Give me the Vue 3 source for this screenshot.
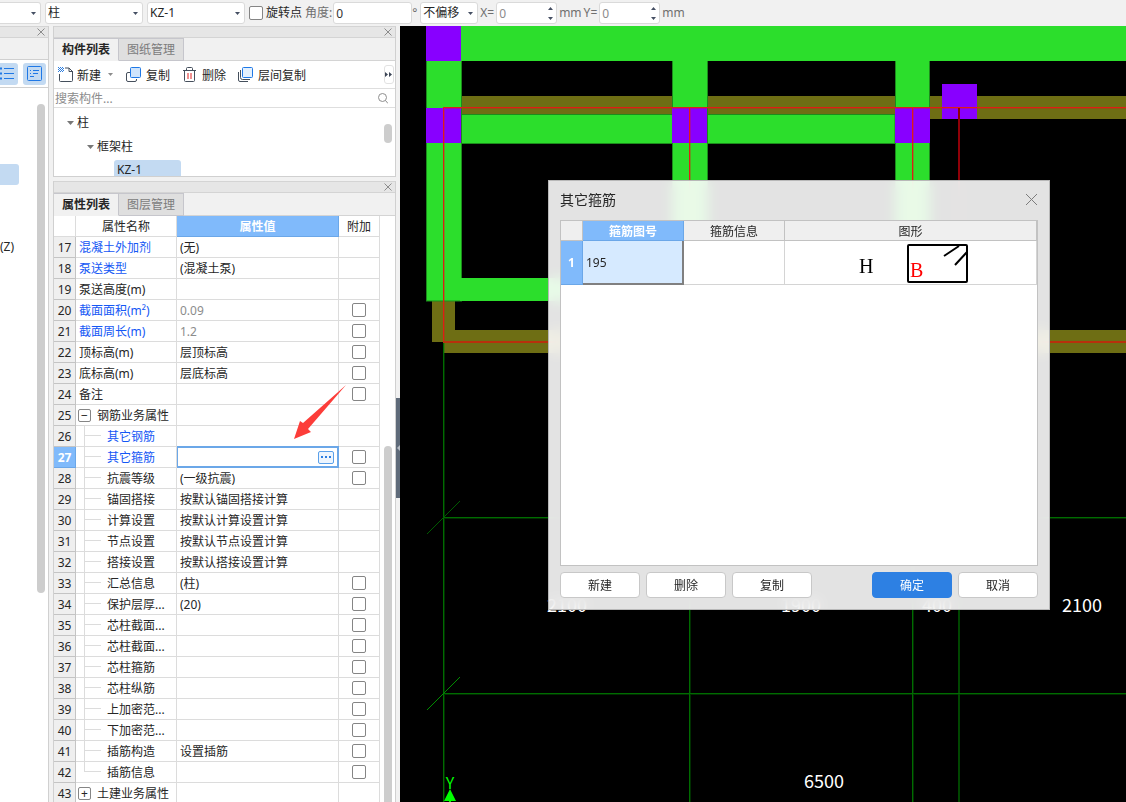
<script setup>
import { ref } from 'vue'

const rows = [
  { n: 17, name: '混凝土外加剂', value: '(无)', blue: true },
  { n: 18, name: '泵送类型', value: '(混凝土泵)', blue: true },
  { n: 19, name: '泵送高度(m)', value: '' },
  { n: 20, name: '截面面积(m²)', value: '0.09', blue: true, muted: true, check: true },
  { n: 21, name: '截面周长(m)', value: '1.2', blue: true, muted: true, check: true },
  { n: 22, name: '顶标高(m)', value: '层顶标高', check: true },
  { n: 23, name: '底标高(m)', value: '层底标高', check: true },
  { n: 24, name: '备注', value: '', check: true },
  { n: 25, name: '钢筋业务属性', value: '', group: '−' },
  { n: 26, name: '其它钢筋', value: '', blue: true, child: true },
  { n: 27, name: '其它箍筋', value: '', blue: true, child: true, check: true, active: true },
  { n: 28, name: '抗震等级', value: '(一级抗震)', child: true, check: true },
  { n: 29, name: '锚固搭接', value: '按默认锚固搭接计算', child: true },
  { n: 30, name: '计算设置', value: '按默认计算设置计算', child: true },
  { n: 31, name: '节点设置', value: '按默认节点设置计算', child: true },
  { n: 32, name: '搭接设置', value: '按默认搭接设置计算', child: true },
  { n: 33, name: '汇总信息', value: '(柱)', child: true, check: true },
  { n: 34, name: '保护层厚...', value: '(20)', child: true, check: true },
  { n: 35, name: '芯柱截面...', value: '', child: true, check: true },
  { n: 36, name: '芯柱截面...', value: '', child: true, check: true },
  { n: 37, name: '芯柱箍筋', value: '', child: true, check: true },
  { n: 38, name: '芯柱纵筋', value: '', child: true, check: true },
  { n: 39, name: '上加密范...', value: '', child: true, check: true },
  { n: 40, name: '下加密范...', value: '', child: true, check: true },
  { n: 41, name: '插筋构造', value: '设置插筋', child: true, check: true },
  { n: 42, name: '插筋信息', value: '', child: true, check: true, last: true },
  { n: 43, name: '土建业务属性', value: '', group: '+' }
]
const angle = ref('0')
const offsetX = ref('0')
const offsetY = ref('0')
const stirrup = ref('')
</script>

<template>
  <div class="app">
    <header class="topbar">
      <div class="pick cut">
        <select aria-label="楼层"><option></option></select>
        <svg class="caret" width="5" height="3"><path d="M0 0h5L2.500 3z" /></svg>
      </div>
      <div class="pick wide">
        <select aria-label="构件类型"><option>柱</option></select>
        <svg class="caret" width="5" height="3"><path d="M0 0h5L2.500 3z" /></svg>
      </div>
      <div class="pick wide">
        <select aria-label="构件"><option>KZ-1</option></select>
        <svg class="caret" width="5" height="3"><path d="M0 0h5L2.500 3z" /></svg>
      </div>
      <label class="rotate"><input type="checkbox" class="box" />旋转点</label>
      <label class="field angle"><span>角度:</span><input v-model="angle" type="text" /></label>
      <span class="degree">°</span>
      <div class="pick offset">
        <select aria-label="偏移方式"><option>不偏移</option></select>
        <svg class="caret" width="5" height="3"><path d="M0 0h5L2.500 3z" /></svg>
      </div>
      <label class="field shift">
        <span>X=</span>
        <span class="spin"><input v-model="offsetX" type="text" />
          <svg width="5" height="15"><path d="M0 4h5L2.500 1zM0 11h5L2.500 14z" /></svg></span>
        <span>mm</span>
      </label>
      <label class="field shift">
        <span>Y=</span>
        <span class="spin"><input v-model="offsetY" type="text" />
          <svg width="5" height="15"><path d="M0 4h5L2.500 1zM0 11h5L2.500 14z" /></svg></span>
        <span>mm</span>
      </label>
    </header>

    <main class="work">
      <aside class="nav">
        <div class="strip">
          <button class="close" aria-label="关闭"><svg width="8" height="8"><path d="M.5 .5L7.500 7.500M7.500 .5L.5 7.500" /></svg></button>
        </div>
        <div class="nav-gap"></div>
        <div class="nav-tools">
          <button class="mode first" aria-label="列表视图">
            <svg width="18" height="22" fill="none" stroke="#1f78e6"><path d="M4 5.500h10M4 10.500h10M4 15.500h10" /><path d="M0 5.500h2M0 10.500h2M0 15.500h2" stroke-width="2" /></svg>
          </button>
          <button class="mode" aria-label="详细视图">
            <svg width="23" height="22" fill="none" stroke="#1f78e6"><rect x="4.500" y="3.500" width="14" height="14" rx="1" /><path d="M7 7.500h1M10 7.500h6M7 10.500h1M10 10.500h5M7 13.500h4" /></svg>
          </button>
        </div>
        <div class="nav-body">
          <div class="nav-list"><div class="nav-current"></div><div class="nav-text">(Z)</div></div>
          <div class="nav-thumb"></div>
        </div>
      </aside>

      <section class="side">
        <div class="panel">
          <div class="strip">
            <button class="close" aria-label="关闭"><svg width="8" height="8"><path d="M.5 .5L7.500 7.500M7.500 .5L.5 7.500" /></svg></button>
          </div>
          <div class="tabs"><button class="tab on">构件列表</button><button class="tab">图纸管理</button></div>
          <div class="tools">
            <button class="tool new">
              <svg width="17" height="16" fill="none" stroke="#454f5c"><path d="M1.500 7v6.500q0 1 1 1h11q1 0 1-1V4.500L11 1H7M11 1v3.500h4" /><path d="M0 .5h5M0 2.500h5M0 4.500h5" stroke="#2b7de0" stroke-dasharray="1 1" /><path d="M1 1.500h5M1 3.500h5" stroke="#2b7de0" stroke-dasharray="1 1" /></svg>新建
              <svg class="caret2" width="5" height="3"><path d="M0 0h5L2.500 3z" /></svg>
            </button>
            <button class="tool copy">
              <svg width="16" height="16" fill="none"><path d="M4 5.500H2q-1.500 0-1.500 1.500v6q0 1.500 1.500 1.500h7q1.500 0 1.500-1.500v-1" stroke="#454f5c" /><rect x="4.500" y=".5" width="10" height="10" rx="1" fill="#cfe4fc" stroke="#1f78e6" /></svg>复制
            </button>
            <button class="tool remove">
              <svg width="15" height="16" fill="none" stroke="#454f5c"><path d="M0 3.500h13M3.500 3V1.500q0-1 1-1h4q1 0 1 1V3M1.500 3.500v10q0 1 1 1h8q1 0 1-1v-10" /><path d="M5 6v6M8 6v6" stroke="#e02020" /></svg>删除
            </button>
            <button class="tool layer">
              <svg width="16" height="16" fill="none"><path d="M.5 5v8q0 1.500 1.500 1.500h8M2.500 3v7.500q0 2 2 2h7.500" stroke="#454f5c" /><rect x="4.500" y=".5" width="10" height="10" rx="1" fill="#e3f0fe" stroke="#1f78e6" /></svg>层间复制
            </button>
            <button class="more" aria-label="更多"><svg width="7" height="5" fill="#3c4656"><path d="M0 0v5l3-2.500zM4 0v5l3-2.500z" /></svg></button>
          </div>
          <label class="search">
            <input type="text" placeholder="搜索构件..." aria-label="搜索构件" />
            <svg width="10" height="11" fill="none" stroke="#8e8e8e"><circle cx="4.500" cy="4.500" r="4" /><path d="M7.500 7.500L10 10.500" /></svg>
          </label>
          <div class="tree">
            <div class="tree-list">
              <div class="node root"><svg width="7" height="4"><path d="M0 0h7L3.500 4z" /></svg>柱</div>
              <div class="node kind"><svg width="7" height="4"><path d="M0 0h7L3.500 4z" /></svg>框架柱</div>
              <div class="node leaf">KZ-1</div>
            </div>
            <div class="tree-thumb"></div>
          </div>
        </div>

        <div class="panel props">
          <div class="strip">
            <button class="close" aria-label="关闭"><svg width="8" height="8"><path d="M.5 .5L7.500 7.500M7.500 .5L.5 7.500" /></svg></button>
          </div>
          <div class="tabs"><button class="tab on">属性列表</button><button class="tab">图层管理</button></div>
          <div class="props-body">
            <table class="grid">
              <colgroup><col class="c-num" /><col class="c-name" /><col class="c-value" /><col class="c-extra" /></colgroup>
              <thead>
                <tr><th></th><th>属性名称</th><th class="hot">属性值</th><th>附加</th></tr>
              </thead>
              <tbody>
                <tr v-for="r in rows" :key="r.n" :class="{ active: r.active }">
                  <th class="num">{{ r.n }}</th>
                  <td class="name" :class="{ blue: r.blue, child: r.child, last: r.last }">
                    <button v-if="r.group" class="fold">{{ r.group }}</button>{{ r.name }}
                  </td>
                  <td class="value" :class="{ muted: r.muted }">
                    <div v-if="r.active" class="edit">
                      <input v-model="stirrup" type="text" aria-label="其它箍筋" />
                      <button aria-label="编辑箍筋"><svg width="10" height="2" fill="#2b7de0"><path d="M0 0h2v2H0zM4 0h2v2H4zM8 0h2v2H8z" /></svg></button>
                    </div>
                    <template v-else>{{ r.value }}</template>
                  </td>
                  <td class="extra"><input v-if="r.check" type="checkbox" class="box" :aria-label="r.name + '附加'" /></td>
                </tr>
              </tbody>
            </table>
            <div class="props-scroll"><div class="props-thumb"></div></div>
            <svg class="pointer" width="54" height="56"><path d="M53 0L10 38L7 36L1 54L18 47L15 44z" fill="#fc3d39" /></svg>
          </div>
        </div>
      </section>

      <div class="splitter"><button aria-label="收起面板"><svg width="3" height="6"><path d="M3 0v6L0 3z" fill="#b8bec6" /></svg></button></div>

      <section class="canvas">
        <svg class="plan" width="100%" height="100%">
          <g transform="translate(-400 -26)">
            <g fill="#6e6e14">
              <rect x="461" y="96" width="2400" height="23" />
              <rect x="432" y="301" width="23" height="41" />
              <rect x="444" y="330" width="2400" height="23" />
            </g>
            <g fill="#2cde2c">
              <g stroke="#1c8c1c">
                <rect x="461" y="114.500" width="434" height="29" />
                <rect x="426.500" y="26" width="35" height="275" />
                <rect x="672.500" y="58" width="35" height="243" />
                <rect x="895.500" y="58" width="34" height="243" />
              </g>
              <rect x="461" y="26" width="2400" height="35" />
              <rect x="460" y="278" width="470" height="23" />
            </g>
            <g fill="#8800ff">
              <rect x="426" y="26" width="35" height="35" />
              <rect x="426" y="108" width="35" height="35" />
              <rect x="672" y="108" width="35" height="35" />
              <rect x="895" y="108" width="35" height="35" />
              <rect x="942" y="84" width="35" height="35" />
            </g>
            <g fill="none" stroke="#008000" stroke-width="2" stroke-opacity=".35">
              <path d="M444 342v1600M690 353v1600M913 353v1600M443 518h2400M443 694h2400" />
            </g>
            <g fill="#006c00">
              <rect x="443" y="342" width="1" height="1600" />
              <rect x="689" y="353" width="1" height="1600" />
              <rect x="912" y="353" width="1" height="1600" />
              <rect x="958" y="353" width="2" height="1600" fill="#004600" />
              <rect x="443" y="517" width="2400" height="1" />
              <rect x="443" y="693" width="2400" height="1" />
            </g>
            <path d="M427 534l33-33" stroke="#005a00" />
            <path d="M427 710l33-33" stroke="#008c00" />
            <path d="M2800 108H444V342M690 108v234M913 108v234" fill="none" stroke="#d81e14" stroke-width="2" stroke-opacity=".35" />
            <g fill="#e01e14">
              <rect x="443" y="107" width="2400" height="1" />
              <rect x="443" y="107" width="1" height="235" />
              <rect x="689" y="108" width="1" height="234" />
              <rect x="912" y="108" width="1" height="234" />
              <rect x="958" y="108" width="2" height="234" fill="#900008" />
              <rect x="443" y="341" width="2400" height="2" fill="#b8300c" />
            </g>
            <g class="dims" fill="#fff">
              <text x="567" y="612">2100</text><text x="801" y="612">1900</text>
              <text x="937" y="612">400</text><text x="1082" y="612">2100</text><text x="824" y="788">6500</text>
            </g>
            <text class="axis" x="450" y="789" fill="#0f0">Y</text>
            <path d="M450 789l6 12h-5v20h-2v-20h-5z" fill="#0f0" />
          </g>
        </svg>
      </section>
    </main>

    <div class="dialog" role="dialog" aria-labelledby="dialog-title">
      <div class="dialog-head">
        <h2 id="dialog-title">其它箍筋</h2>
        <button class="dialog-close" aria-label="关闭"><svg width="11" height="11"><path d="M0 0L11 11M11 0L0 11" stroke="#7c7c7c" /></svg></button>
      </div>
      <div class="dialog-body">
        <table class="shapes">
          <colgroup><col class="d-num" /><col class="d-id" /><col class="d-info" /><col /></colgroup>
          <thead><tr><th></th><th class="hot">箍筋图号</th><th>箍筋信息</th><th>图形</th></tr></thead>
          <tbody>
            <tr>
              <th class="hot">1</th><td class="picked">195</td><td></td>
              <td class="figure">
                <svg width="110" height="43" fill="none" stroke="#000" stroke-width="2">
                  <rect x="49" y="4" width="59" height="37" rx="1" />
                  <path d="M85 15L100 5M96 24L108 11" />
                  <text x="0" y="32" fill="#000" stroke="none">H</text><text x="51" y="36" fill="#f00" stroke="none">B</text>
                </svg>
              </td>
            </tr>
          </tbody>
        </table>
      </div>
      <div class="dialog-foot">
        <button>新建</button><button>删除</button><button>复制</button>
        <span class="grow"></span>
        <button class="primary">确定</button><button>取消</button>
      </div>
    </div>
  </div>
</template>

<style>
html, body { margin: 0; background: #f1f1f1; }
</style>

<style scoped>
.app, .app * { box-sizing: border-box; }
.app {
  position: relative;
  display: flex;
  flex-direction: column;
  height: 100vh;
  overflow: hidden;
  background: #f1f1f1;
  color: #262626;
  font: 12px/20px "Noto Sans", "Noto Sans CJK SC", sans-serif;
}
button, input, select { font: inherit; color: inherit; margin: 0; padding: 0; border: 0; background: none; outline: 0; }
svg { display: block; flex: none; }
table { border-spacing: 0; table-layout: fixed; }
th, td { padding: 0; }

.topbar { flex: none; display: flex; align-items: center; height: 26px; white-space: nowrap; color: #6f6f6f; }
.pick { position: relative; flex: none; height: 22px; margin-right: 4px; background: #fff; border: 1px solid #dadada; border-radius: 3px; color: #262626; }
.pick select { width: 100%; height: 20px; padding-left: 2px; appearance: none; line-height: 20px; }
.pick .caret { position: absolute; right: 4px; top: 9px; pointer-events: none; }
.caret path, .spin path { fill: #454f63; }
.cut { width: 41px; border-left: 0; border-radius: 0 3px 3px 0; }
.wide { width: 98px; }
.offset { width: 58px; margin-right: 2px; }
.rotate { display: flex; align-items: center; gap: 3px; margin-right: 3px; color: #262626; }
.box { flex: none; appearance: none; display: block; width: 14px; height: 14px; border: 1px solid #858585; border-radius: 2px; background: #fff; }
.field { display: flex; align-items: center; }
.angle { gap: 1px; }
.field input { width: 79px; height: 22px; padding-left: 2px; background: #fff; border: 1px solid #dadada; border-radius: 3px; }
.angle input { color: #333; }
.degree { width: 8px; }
.spin { position: relative; }
.spin input { display: block; width: 61px; color: #8c8c8c; }
.spin svg { position: absolute; right: 4px; top: 4px; }
.shift { gap: 2px; margin-right: 2px; }

.work { flex: 1; min-height: 0; display: flex; }
.strip { flex: none; display: flex; justify-content: flex-end; align-items: center; height: 12px; padding-right: 3px; background: #e6e6e6; border: solid #d4d4d4; border-width: 1px 0; }
.close svg { stroke: #8c8c8c; fill: none; }

.nav { flex: none; display: flex; flex-direction: column; width: 49px; margin-right: 4px; background: #fff; border-right: 1px solid #d0d0d0; }
.nav-gap { height: 22px; background: #f1f1f1; border-bottom: 1px solid #d0d0d0; }
.nav-tools { display: flex; gap: 5px; padding: 3px 0 2px; height: 28px; border-bottom: 1px solid #d0d0d0; }
.mode { width: 23px; height: 22px; border-radius: 3px; background: #c3daf2; }
.mode.first { width: 18px; border-radius: 0 3px 3px 0; }
.nav-body { display: flex; flex: 1; justify-content: space-between; padding-right: 3px; }
.nav-current { width: 19px; height: 21px; margin-top: 76px; background: #c3daf2; border-radius: 0 3px 3px 0; }
.nav-text { margin-top: 52px; }
.nav-thumb { width: 8px; height: 489px; margin-top: 16px; border-radius: 4px; background: #cdcdcd; }

.side { flex: none; width: 343px; display: flex; flex-direction: column; gap: 4px; }
.panel { background: #fff; border: solid #d0d0d0; border-width: 0 1px 1px; }
.tabs { display: flex; height: 23px; background: #f1f1f1; border-bottom: 1px solid #d4d4d4; }
.tab { width: 65px; height: 23px; padding-top: 1px; border: 1px solid #c6c6cc; border-width: 1px 1px 1px 0; background: #dfdfdf; color: #7c7c7c; }
.tab.on { background: #f1f1f1; color: #262626; font-weight: bold; border-bottom-color: #f1f1f1; }
.tools { display: flex; align-items: center; height: 27px; padding-left: 4px; }
.tool { display: flex; align-items: center; gap: 4px; height: 26px; padding-top: 2px; white-space: nowrap; }
.tool svg { margin-bottom: 2px; }
.new { gap: 2px; margin-right: 13px; }
.caret2 { margin-left: 5px; fill: #8c8c8c; }
.copy { margin-right: 13px; }
.layer { margin-left: 12px; }
.more { width: 10px; height: 19px; margin: 0 1px 0 auto; border: 1px solid #e2e2e2; border-radius: 3px; }
.search { display: flex; align-items: center; height: 20px; padding: 0 7px 0 1px; border: solid #dedede; border-width: 1px 0; }
.search input { flex: 1; min-width: 0; height: 18px; padding-top: 2px; }
.search input::placeholder { color: #8c8c8c; opacity: 1; }
.tree { display: flex; justify-content: space-between; height: 68px; padding-right: 3px; }
.tree-list { padding-top: 3px; }
.node { display: flex; align-items: center; height: 24px; gap: 3px; }
.node svg { fill: #777; }
.root { padding-left: 13px; }
.kind { padding-left: 33px; }
.leaf { height: 16px; width: 67px; margin: 1px 0 0 60px; padding: 4px 0 0 3px; line-height: 12px; background: #c3daf2; border-radius: 3px 3px 0 0; }
.tree-thumb { width: 8px; height: 19px; margin-top: 16px; border-radius: 4px; background: #cdcdcd; }

.props { flex: 1; min-height: 0; display: flex; flex-direction: column; border-bottom: 0; }
.props .tabs { flex: none; }
.props-body { position: relative; flex: 1; min-height: 0; display: flex; justify-content: space-between; overflow: hidden; }
.grid { width: 326px; height: 588px; }
.c-num { width: 22px; }
.c-name { width: 101px; }
.c-value { width: 162px; }
.c-extra { width: 41px; }
.grid tr { height: 21px; }
.grid th, .grid td { height: 21px; padding-top: 2px; line-height: 18px; border: solid #dcdcdc; border-width: 0 1px 1px 0; white-space: nowrap; font-weight: normal; }
.grid .num { background: #efefef; border-color: #c4c4c4; }
.grid .hot, .shapes .hot { background: #80bafb; color: #fff; font-weight: bold; border-color: #6ba7e8; }
.grid .active .num { background: #80bafb; color: #fff; font-weight: bold; border-color: #6ba7e8; }
.grid .name { position: relative; padding-left: 3px; }
.grid .blue { color: #1457f5; }
.grid .child { padding-left: 31px; }
.name.child::before { content: ""; position: absolute; left: 8px; top: 0; width: 1px; height: 21px; background: #dcdcdc; }
.name.child::after { content: ""; position: absolute; left: 9px; top: 9px; width: 16px; height: 1px; background: #dcdcdc; }
.name.last::before { height: 10px; }
.fold { display: inline-flex; align-items: center; justify-content: center; width: 13px; height: 13px; margin: 0 6px 0 -1px; vertical-align: 0; border: 1px solid #858585; border-radius: 2px; line-height: 11px; }
.value { padding-left: 3px; }
.grid .active .value { padding: 0; }
.value.muted { color: #8c8c8c; }
.grid .extra { padding-top: 0; }
.extra .box { margin: 0 auto; }
.edit { display: flex; align-items: center; height: 20px; padding-right: 4px; outline: 2px solid #6ba7e8; outline-offset: -1px; background: #fff; }
.edit input { flex: 1; min-width: 0; height: 16px; padding-left: 3px; }
.edit button { display: flex; align-items: center; justify-content: center; width: 16px; height: 13px; border: 1px solid #5aa0ea; border-radius: 2px; background: #edf5fe; }
.props-scroll { width: 11px; }
.props-thumb { width: 8px; height: 100%; margin-top: 230px; border-radius: 4px; background: #cdcdcd; }
.pointer { position: absolute; left: 239px; top: 169px; }

.splitter { flex: none; width: 4px; padding-top: 372px; }
.splitter button { display: flex; align-items: center; width: 4px; height: 100px; padding-left: 1px; background: #5f6b7a; }
.canvas { flex: 1; min-width: 0; background: #000; overflow: hidden; }
.dims { font: 18px "Noto Sans CJK SC", sans-serif; text-anchor: middle; }
.axis { font: 16px "Noto Sans CJK SC", sans-serif; text-anchor: middle; }

.dialog { position: absolute; left: 548px; top: 180px; width: 502px; padding: 0 11px 11px; border: 1px solid #b8b8b8; background: rgba(255, 255, 255, .89); backdrop-filter: blur(7px); }
.dialog-head { display: flex; align-items: center; justify-content: space-between; height: 39px; padding-bottom: 2px; }
.dialog-head h2 { margin: 0; font-size: 14px; line-height: 20px; font-weight: normal; }
.dialog-close { padding: 0 1px; }
.dialog-body { height: 346px; background: #fff; border: 1px solid #c2c2c2; }
.shapes { width: 100%; }
.d-num { width: 22px; }
.d-id, .d-info { width: 101px; }
.shapes th, .shapes td { border: solid #d4d4d4; border-width: 0 1px 1px 0; font-weight: normal; }
.shapes thead th { height: 20px; padding-top: 2px; line-height: 17px; background: #efefef; border-color: #c2c2c2; }
.shapes .hot, .shapes thead .hot { background: #80bafb; border-color: #6ba7e8; font-weight: bold; }
.shapes tbody tr { height: 44px; }
.shapes .picked { padding: 2px 0 0 3px; background: #d6eaff; border: solid #808080; border-width: 0 2px 2px 0; }
.figure svg { margin-left: 74px; font: 20px "Liberation Serif", serif; }
.dialog-foot { display: flex; gap: 6px; padding-top: 6px; }
.dialog-foot button { width: 80px; height: 26px; padding-top: 2px; background: #fff; border: 1px solid #c8c8c8; border-radius: 4px; }
.grow { flex: 1; }
.dialog-foot .primary { background: #2d80e3; border-color: #2d80e3; color: #fff; }
</style>
